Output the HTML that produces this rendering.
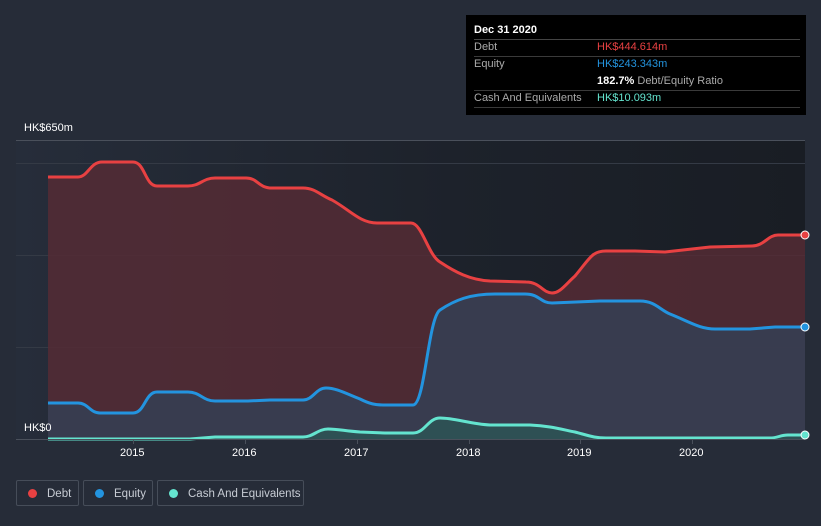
<!DOCTYPE html>
<html><head><style>
body{margin:0;width:821px;height:526px;background:#262c38;font-family:"Liberation Sans",sans-serif;overflow:hidden;position:relative}
.tt{position:absolute;left:466px;top:15px;width:340px;height:100px;background:#000;color:#fff;font-size:11px}
.tt .r{position:absolute;left:8px;right:6px;border-bottom:1px solid #3a3a3a;height:17px;line-height:17px}
.lab{color:#aaa}
.leg{position:absolute;top:480px;height:26px;border:1px solid #464d59;border-radius:2px;color:#c7ccd4;font-size:11.5px;line-height:26px;box-sizing:border-box;white-space:nowrap}
.leg i{display:inline-block;width:9px;height:9px;border-radius:50%;margin:0 10px 0 11px;vertical-align:-1px}
.ax{position:absolute;color:#fff;font-size:11px}
</style></head><body>
<svg width="821" height="526" style="position:absolute;left:0;top:0">
<defs>
<linearGradient id="bg" x1="0" x2="1"><stop offset="0" stop-color="#262d3a"/><stop offset="0.55" stop-color="#1d222b"/><stop offset="1" stop-color="#191d24"/></linearGradient>
</defs>
<rect x="16" y="140" width="789" height="299" fill="url(#bg)"/>
<line x1="16" y1="140.5" x2="805" y2="140.5" stroke="#4a505b"/>
<line x1="16" y1="163.5" x2="805" y2="163.5" stroke="#343a45"/>
<line x1="16" y1="255.5" x2="805" y2="255.5" stroke="#343a45"/>
<line x1="16" y1="347.5" x2="805" y2="347.5" stroke="#343a45"/>
<path d="M48,177 L78,177 C88,177 90,162 102,162 L133,162 C145,162 145,186 157,186 L188,186 C200,186 203,178 215,178 L246,178 C258,178 258,188 272,188 L303,188 C315,188 320,195 332,200 C350,210 360,223 377,223 L411,223 C422,223 428,255 440,262 C455,272 470,280 490,281 L526,282 C540,282 543,293 552,293 C560,293 565,285 575,276 C590,258 592,251 606,251 L635,251 L665,252 L710,247 L752,246 C764,246 768,235 778,235 L805,235 L805,439 L48,439Z" fill="#552c35" fill-opacity="0.85"/>
<path d="M48,403 L78,403 C88,403 90,413 100,413 L133,413 C145,413 145,392 157,392 L188,392 C200,392 203,401 215,401 L248,401 L270,400 L303,400 C313,400 316,388 326,388 C336,388 345,393 360,399 C370,404 375,405 385,405 L413,405 C425,405 428,318 440,310 C455,300 470,294 495,294 L525,294 C540,294 540,303 552,303 L600,301 L640,301 C655,301 660,310 670,314 C690,322 700,329 715,329 L750,329 L775,327 L805,327 L805,439 L48,439Z" fill="#363e52" fill-opacity="0.9"/>
<path d="M48,439 L190,439 L215,437 L270,437 L303,437 C313,437 318,429 328,429 C338,429 345,431 360,432 L385,433 L413,433 C425,433 428,418 440,418 C455,418 470,424 490,425 L530,425 C550,426 560,429 575,432 C590,436 595,438 606,438 L770,438 C778,438 780,435 788,435 L805,435 L805,439Z" fill="#2c5555" fill-opacity="0.8"/>
<path d="M48,177 L78,177 C88,177 90,162 102,162 L133,162 C145,162 145,186 157,186 L188,186 C200,186 203,178 215,178 L246,178 C258,178 258,188 272,188 L303,188 C315,188 320,195 332,200 C350,210 360,223 377,223 L411,223 C422,223 428,255 440,262 C455,272 470,280 490,281 L526,282 C540,282 543,293 552,293 C560,293 565,285 575,276 C590,258 592,251 606,251 L635,251 L665,252 L710,247 L752,246 C764,246 768,235 778,235 L805,235" fill="none" stroke="#e84142" stroke-width="3"/>
<path d="M48,403 L78,403 C88,403 90,413 100,413 L133,413 C145,413 145,392 157,392 L188,392 C200,392 203,401 215,401 L248,401 L270,400 L303,400 C313,400 316,388 326,388 C336,388 345,393 360,399 C370,404 375,405 385,405 L413,405 C425,405 428,318 440,310 C455,300 470,294 495,294 L525,294 C540,294 540,303 552,303 L600,301 L640,301 C655,301 660,310 670,314 C690,322 700,329 715,329 L750,329 L775,327 L805,327" fill="none" stroke="#2394df" stroke-width="3"/>
<path d="M48,439 L190,439 L215,437 L270,437 L303,437 C313,437 318,429 328,429 C338,429 345,431 360,432 L385,433 L413,433 C425,433 428,418 440,418 C455,418 470,424 490,425 L530,425 C550,426 560,429 575,432 C590,436 595,438 606,438 L770,438 C778,438 780,435 788,435 L805,435" fill="none" stroke="#64e4cf" stroke-width="3"/>
<line x1="16" y1="439.5" x2="805" y2="439.5" stroke="#4a505b"/>
<g stroke="#4a505b"><line x1="133.5" y1="440" x2="133.5" y2="444"/><line x1="245.5" y1="440" x2="245.5" y2="444"/><line x1="357.5" y1="440" x2="357.5" y2="444"/><line x1="469.5" y1="440" x2="469.5" y2="444"/><line x1="580.5" y1="440" x2="580.5" y2="444"/><line x1="692.5" y1="440" x2="692.5" y2="444"/></g>
<circle cx="805" cy="235" r="4" fill="#e84142" stroke="#fff" stroke-width="1"/>
<circle cx="805" cy="327" r="4" fill="#2394df" stroke="#fff" stroke-width="1"/>
<circle cx="805" cy="435" r="4" fill="#64e4cf" stroke="#fff" stroke-width="1"/>
</svg>
<div class="ax" style="left:24px;top:122px">HK$650m</div>
<div class="ax" style="left:24px;top:422px">HK$0</div>
<div class="ax" style="left:120px;top:447px">2015</div>
<div class="ax" style="left:232px;top:447px">2016</div>
<div class="ax" style="left:344px;top:447px">2017</div>
<div class="ax" style="left:456px;top:447px">2018</div>
<div class="ax" style="left:567px;top:447px">2019</div>
<div class="ax" style="left:679px;top:447px">2020</div>
<div class="tt">
<div class="r" style="top:7px;font-weight:bold;border-color:#444">Dec 31 2020</div>
<div class="r" style="top:24px"><span class="lab">Debt</span><span style="position:absolute;left:123px;color:#e84142">HK$444.614m</span></div>
<div class="r" style="top:41px;border:none"><span class="lab">Equity</span><span style="position:absolute;left:123px;color:#2394df">HK$243.343m</span></div>
<div class="r" style="top:58px"><span style="position:absolute;left:123px"><b>182.7%</b> <span class="lab">Debt/Equity Ratio</span></span></div>
<div class="r" style="top:75px"><span class="lab">Cash And Equivalents</span><span style="position:absolute;left:123px;color:#64e4cf">HK$10.093m</span></div>
</div>
<div class="leg" style="left:16px;width:63px"><i style="background:#e84142"></i>Debt</div>
<div class="leg" style="left:83px;width:70px"><i style="background:#2394df"></i>Equity</div>
<div class="leg" style="left:157px;width:147px"><i style="background:#64e4cf"></i>Cash And Equivalents</div>
</body></html>
